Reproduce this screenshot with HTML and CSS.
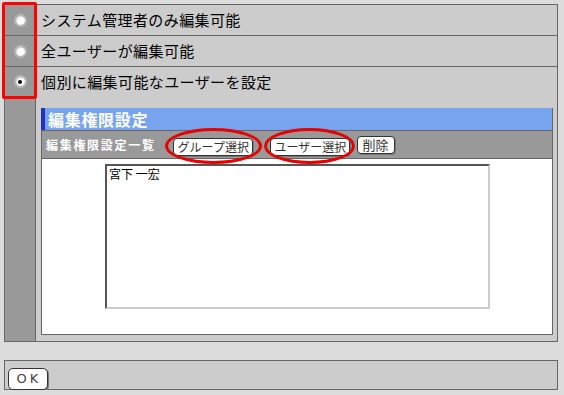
FILE: index.html
```html
<!DOCTYPE html>
<html lang="ja">
<head>
<meta charset="utf-8">
<link rel="stylesheet" href="styles.css">
</head>
<body>
<div class="perm">
  <div class="opt">
    <div class="sel"><span class="radio"></span></div>
    <div class="label">システム管理者のみ編集可能</div>
  </div>
  <div class="opt">
    <div class="sel"><span class="radio"></span></div>
    <div class="label">全ユーザーが編集可能</div>
  </div>
  <div class="opt opt-last">
    <div class="sel"><span class="radio checked"></span></div>
    <div class="body">
      <div class="label">個別に編集可能なユーザーを設定</div>
      <div class="panel">
        <div class="heading">編集権限設定</div>
        <div class="toolbar">
          <span class="tb-label">編集権限設定一覧</span>
          <span class="mark"><span class="btn">グループ選択</span></span>
          <span class="mark mark2"><span class="btn">ユーザー選択</span></span>
          <span class="btn btn-del">削除</span>
        </div>
        <div class="list-area">
          <div class="listbox">
            <div class="item">宮下 一宏</div>
          </div>
        </div>
      </div>
    </div>
  </div>
  <div class="radio-mark"></div>
</div>
<div class="footer">
  <span class="btn btn-ok">OK</span>
</div>
</body>
</html>
```
FILE: styles.css
```css
html, body {
  margin: 0;
  padding: 0;
}
body {
  background: #dcdcdc;
  padding: 4px 0 0 4px;
  font-family: "Noto Sans CJK JP", "DejaVu Sans", sans-serif;
  color: #000;
}
.perm {
  position: relative;
  width: 554px;
  box-sizing: border-box;
  border: 1px solid #666;
  background: #cccccc;
}
.opt {
  display: flex;
}
.opt + .opt {
  border-top: 1px solid #666;
}
.sel {
  width: 31px;
  flex: none;
  background: #999;
  border-right: 1px solid #666;
  display: flex;
  justify-content: center;
  align-items: flex-start;
  padding-top: 10px;
  box-sizing: border-box;
  height: 30px;
}
.opt-last .sel {
  height: auto;
  padding-top: 9px;
}
.radio {
  width: 11px;
  height: 11px;
  border-radius: 50%;
  background: #fff;
  box-sizing: border-box;
  border: 1px solid #aaa;
  box-shadow: inset 1px 1px 0 #ddd, 0 0 0 1px #bbb;
  display: flex;
  align-items: center;
  justify-content: center;
}
.radio.checked::after {
  content: "";
  width: 4px;
  height: 4px;
  border-radius: 50%;
  background: #000;
}
.label {
  height: 30px;
  line-height: 29px;
  padding-left: 5px;
  font-size: 15px;
  letter-spacing: 0.4px;
  white-space: nowrap;
}
.body {
  flex: 1;
  display: flex;
  flex-direction: column;
}
.panel {
  margin: 11px 4px 6px 5px;
  border: 1px solid #666;
  border-top: none;
  background: #fff;
}
.heading {
  height: 22px;
  line-height: 22px;
  background: #78a3ee;
  border-left: 4px solid #2233bb;
  margin-left: -1px;
  padding-left: 3px;
  color: #fff;
  font-size: 16px;
  font-weight: bold;
  letter-spacing: 0.7px;
}
.toolbar {
  height: 29px;
  background: #999;
  border-top: 1px solid #666;
  border-bottom: 1px solid #666;
  display: flex;
  align-items: center;
  padding-left: 4px;
  box-sizing: border-box;
}
.tb-label {
  color: #fff;
  font-size: 12px;
  font-weight: bold;
  letter-spacing: 1.7px;
  margin-right: 17px;
}
.btn {
  display: inline-block;
  height: 18px;
  line-height: 16px;
  box-sizing: border-box;
  padding: 0 4px;
  background: #fff;
  border: 1px solid #333;
  border-radius: 4px;
  box-shadow: 1px 1px 0 #777;
  font-size: 12px;
  color: #333;
  white-space: nowrap;
}
.mark {
  position: relative;
  display: inline-block;
  margin-right: 17px;
}
.mark .btn {
  width: 80px;
  text-align: center;
}
.mark::after {
  content: "";
  position: absolute;
  left: -8px;
  right: -9px;
  top: -5px;
  bottom: -7px;
  border: 3px solid #e60000;
  border-radius: 50%;
}
.mark2 {
  margin-right: 7px;
}
.mark2::after {
  left: -6px;
  right: -5px;
}
.btn-del {
  width: 38px;
  text-align: center;
  padding: 0;
  font-size: 13px;
}
.list-area {
  height: 175px;
  padding: 5px 0 0 63px;
  box-sizing: border-box;
}
.listbox {
  width: 385px;
  height: 145px;
  box-sizing: border-box;
  border-style: solid;
  border-width: 2px;
  border-color: #555 #ccc #ccc #555;
  background: #fff;
  padding: 1px 2px;
}
.item {
  font-size: 12px;
  line-height: 14px;
}
.radio-mark {
  position: absolute;
  left: -3px;
  top: -3px;
  width: 35px;
  height: 97px;
  box-sizing: border-box;
  border: 3px solid #f00;
  border-radius: 2px;
}
.footer {
  margin-top: 18px;
  width: 554px;
  height: 30px;
  box-sizing: border-box;
  border: 1px solid #666;
  background: #cccccc;
  padding: 3px 0 0 3px;
}
.btn-ok {
  width: 40px;
  height: 22px;
  line-height: 20px;
  text-align: center;
  font-family: "DejaVu Sans", sans-serif;
  font-size: 13px;
  letter-spacing: 3px;
  padding: 0 0 0 2px;
  color: #444;
  border-radius: 5px;
}
```
